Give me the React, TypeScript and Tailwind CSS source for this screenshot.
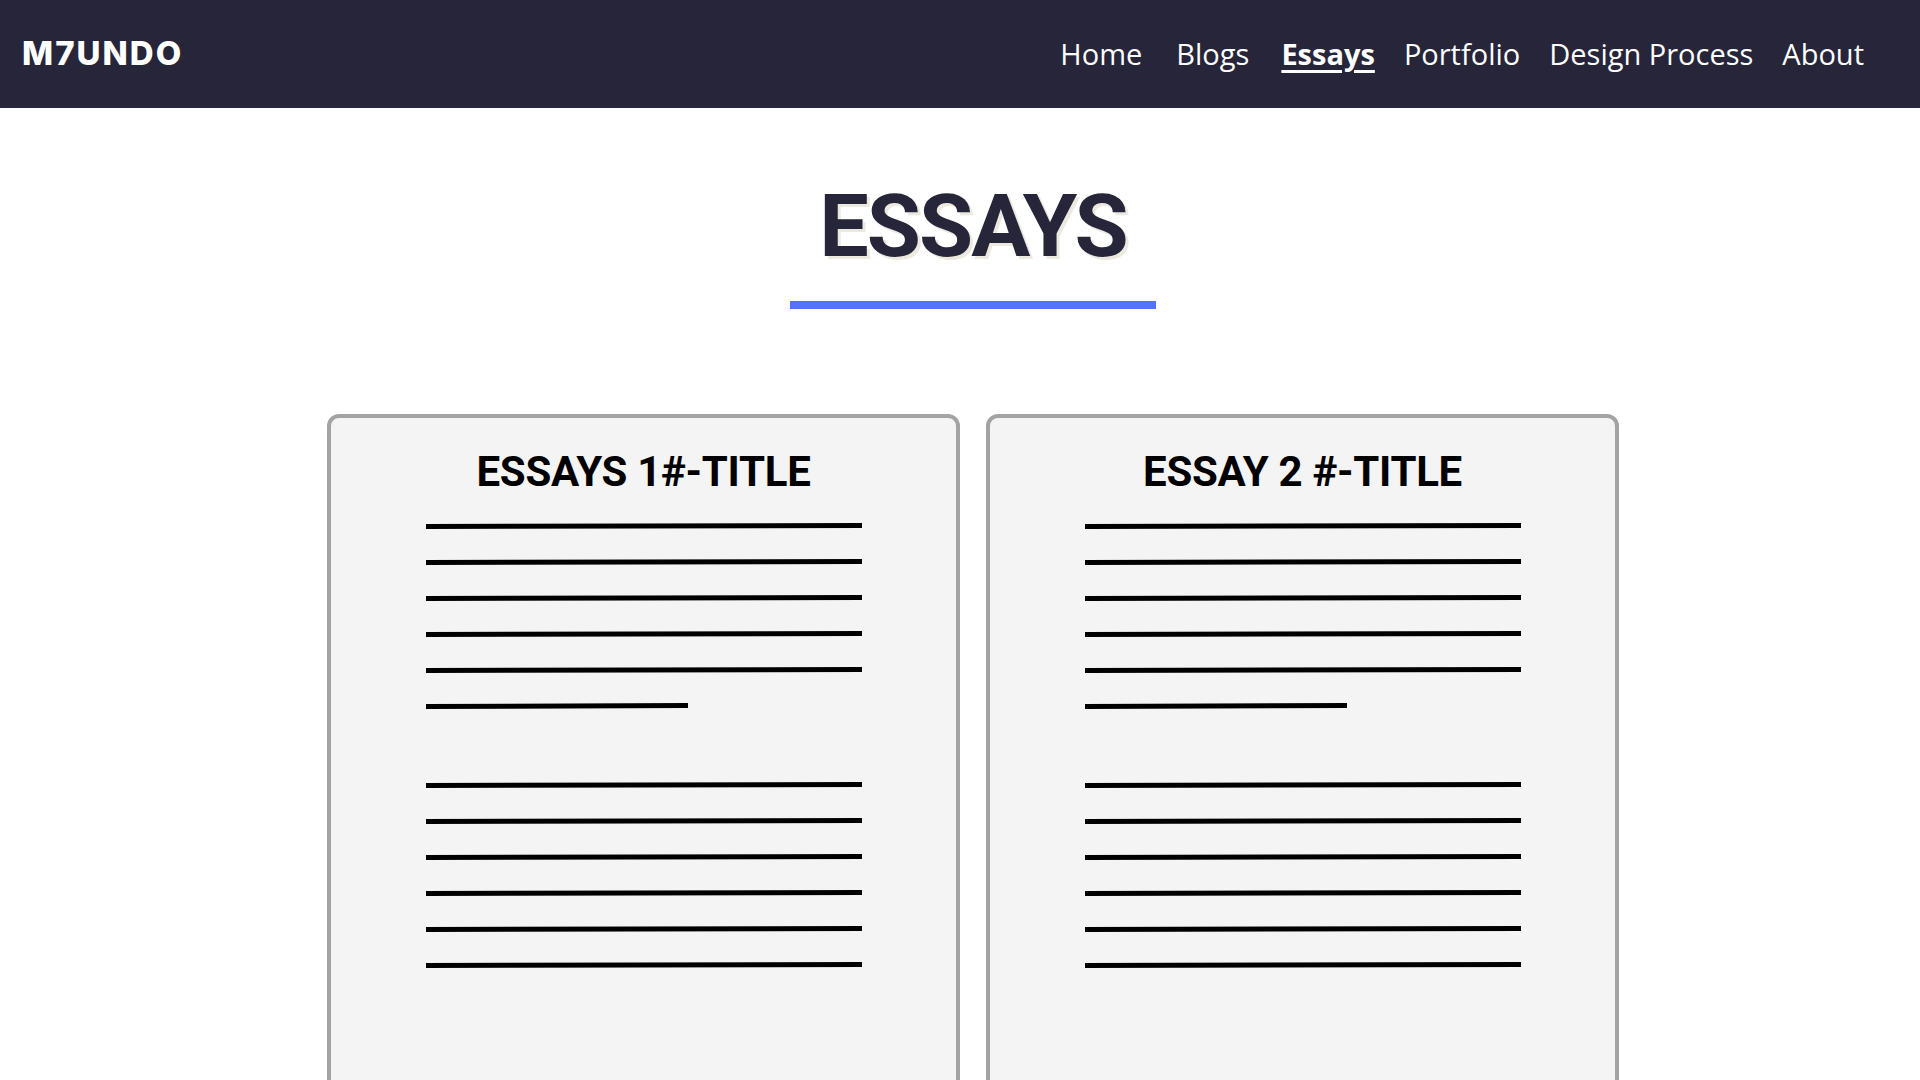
import React from 'react';

const navItems = ['Home', 'Blogs', 'Essays', 'Portfolio', 'Design Process', 'About'];

interface EssayCardProps {
  title: string;
}

// lines sketched on the paper: 1 = full width, 0.6 = short closing line
const firstPara = [1, 1, 1, 1, 1, 0.6];
const secondPara = [1, 1, 1, 1, 1, 1];

function TextLine({ ratio }: { ratio: number }) {
  const w = Math.round(436 * ratio);
  return (
    <svg width={w} height={7} viewBox={`0 0 ${w} 7`} className="block">
      <polygon points={`0,2 ${w},1 ${w},6 0,7`} fill="#000" />
    </svg>
  );
}

function EssayCard({ title }: EssayCardProps) {
  return (
    <div className="w-[633px] h-[700px] bg-[#f4f4f4] border-4 border-[#a3a3a3] rounded-[12px] flex flex-col items-center pt-[26px]">
      <h2 className="font-['Roboto',sans-serif] font-bold text-[42px] leading-[56px] text-black tracking-[-0.3px]">
        {title}
      </h2>
      <div className="w-[436px] mt-[22px] flex flex-col gap-[29px]">
        {firstPara.map((r, i) => (
          <TextLine key={i} ratio={r} />
        ))}
      </div>
      <div className="w-[436px] mt-[72px] flex flex-col gap-[29px]">
        {secondPara.map((r, i) => (
          <TextLine key={i} ratio={r} />
        ))}
      </div>
    </div>
  );
}

export default function App() {
  return (
    <div className="w-[1920px] h-[1080px] overflow-hidden bg-white">
      <header className="h-[108px] bg-[#262539] flex items-center justify-between pl-[22px] pr-[56px]">
        <div className="font-['Inter',sans-serif] font-extrabold text-[33px] text-white tracking-[2px]">
          M7UNDO
        </div>
        <nav className="flex items-center gap-[29px] font-['Open_Sans',sans-serif] text-[29px] text-white">
          {navItems.map((item) =>
            item === 'Essays' ? (
              <a key={item} className="font-bold underline underline-offset-[5px] decoration-[3px]">
                {item}
              </a>
            ) : (
              <a key={item} className={item === 'Home' ? 'mr-[5px]' : item === 'Blogs' ? 'mr-[3px]' : ''}>
                {item}
              </a>
            )
          )}
        </nav>
      </header>

      <main className="pl-[26px] flex flex-col items-center">
        <h1 className="mt-[68px] font-['Roboto',sans-serif] font-bold text-[88px] leading-[100px] tracking-[-2px] text-[#262539] [text-shadow:3px_3px_0_#ece9e1]">
          ESSAYS
        </h1>
        <div className="mt-[25px] w-[366px] h-[8px] bg-[#5673fd]" />

        <div className="mt-[105px] flex gap-[26px]">
          <EssayCard title="ESSAYS 1#-TITLE" />
          <EssayCard title="ESSAY 2 #-TITLE" />
        </div>
      </main>
    </div>
  );
}
